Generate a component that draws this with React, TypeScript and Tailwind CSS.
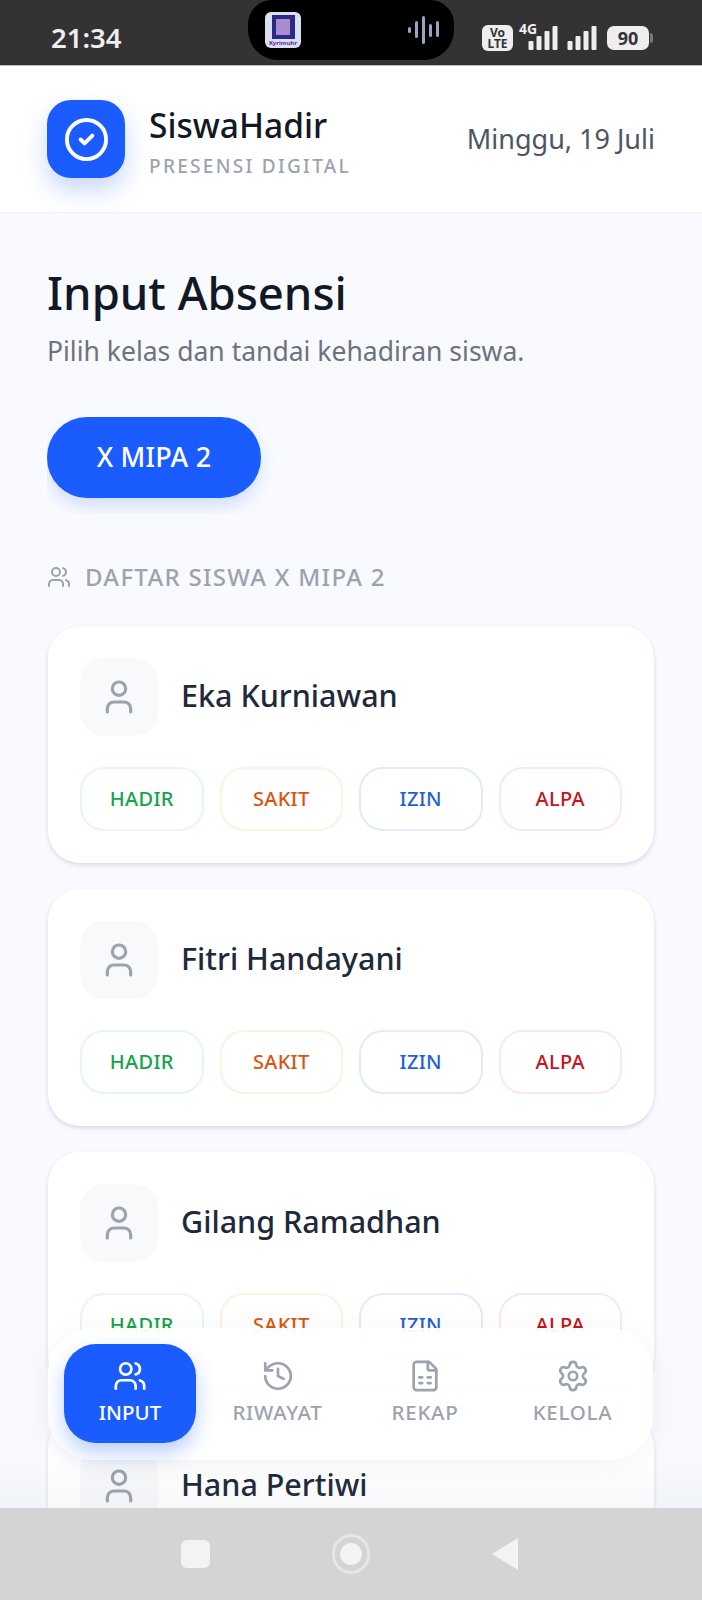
import { CircleCheck, FileSpreadsheet, History, Settings, User, Users } from "lucide-react";

const students = ["Eka Kurniawan", "Fitri Handayani", "Gilang Ramadhan", "Hana Pertiwi"];

const statuses = [
  { label: "HADIR", className: "border-[#e6f8ed] text-[#16a34a]" },
  { label: "SAKIT", className: "border-[#fdf1df] text-[#d9560f]" },
  { label: "IZIN", className: "border-[#e0ebfb] text-[#1f5fd8]" },
  { label: "ALPA", className: "border-[#fbe8e8] text-[#c8141e]" },
];

const tabs = [
  { label: "RIWAYAT", icon: History },
  { label: "REKAP", icon: FileSpreadsheet },
  { label: "KELOLA", icon: Settings },
];

const Signal = ({ className }: { className?: string }) => (
  <svg viewBox="0 0 30 24" className={className} fill="#eeeeee">
    <rect x="0" y="15" width="5" height="9" rx="1" />
    <rect x="8" y="10" width="5" height="14" rx="1" />
    <rect x="16" y="5" width="5" height="19" rx="1" />
    <rect x="24" y="0" width="5" height="24" rx="1" />
  </svg>
);

const StatusBar = () => (
  <div className="relative h-[66px] shrink-0 bg-[#333333] border-b border-[#bdbdbd]">
    <span className="absolute left-[51px] top-[21px] text-[27.5px] leading-[34px] font-semibold text-[#eeeeee]">21:34</span>
    <div className="absolute left-[248px] top-0 h-[60px] w-[206px] rounded-b-[30px] rounded-t-[24px] bg-black">
      <div className="absolute left-[17px] top-[12px] flex h-[36px] w-[36px] flex-col items-center overflow-hidden rounded-[6px] bg-[#d9e0f2] pt-[3px]">
        <div className="flex h-[24px] w-[23px] shrink-0 items-center justify-center bg-[#2c2a86]">
          <div className="h-[16px] w-[14px] bg-[#a98bd0]" />
        </div>
        <span className="text-[6px] leading-[8px] font-bold text-[#6b21a8]">Kyrimuhr</span>
      </div>
      <svg viewBox="0 0 34 28" className="absolute left-[158px] top-[16px] h-[28px] w-[34px]" fill="#9aa2c8">
        <rect x="2" y="11" width="3" height="6" rx="1.5" />
        <rect x="9" y="5" width="3" height="17" rx="1.5" />
        <rect x="16" y="0" width="3" height="28" rx="1.5" />
        <rect x="23" y="8" width="3" height="13" rx="1.5" />
        <rect x="30" y="5" width="3" height="16" rx="1.5" />
      </svg>
    </div>
    <div className="absolute left-[482px] top-[25px] flex h-[26px] w-[31px] flex-col items-center justify-center rounded-[6px] bg-[#eeeeee] text-[12px] leading-[11px] font-bold text-[#333333]">
      <span>Vo</span>
      <span>LTE</span>
    </div>
    <span className="absolute left-[519px] top-[22px] text-[14px] leading-[14px] font-bold text-[#eeeeee]">4G</span>
    <Signal className="absolute left-[528px] top-[26px] h-[24px] w-[31px]" />
    <Signal className="absolute left-[567px] top-[26px] h-[24px] w-[31px]" />
    <div className="absolute left-[607px] top-[26px] flex h-[24px] w-[42px] items-center justify-center rounded-[7px] bg-[#eeeeee] text-[18px] font-bold text-[#333333]">90</div>
    <div className="absolute left-[650px] top-[33px] h-[10px] w-[3px] rounded-r-sm bg-[#777777]" />
  </div>
);

const StudentCard = ({ name }: { name: string }) => (
  <div className="mx-px h-[237px] shrink-0 rounded-[32px] bg-white px-[32px] pt-[32px] shadow-[0_2px_4px_rgba(15,23,42,0.14)]">
    <div className="flex items-center gap-[23px]">
      <div className="flex h-[78px] w-[78px] items-center justify-center rounded-[24px] bg-[#f8f9fb]">
        <User className="h-[40px] w-[40px] text-[#9ca3af]" strokeWidth={1.9} />
      </div>
      <span className="pb-[2px] text-[30.5px] font-medium text-[#1e293b]">{name}</span>
    </div>
    <div className="mt-[31px] grid grid-cols-4 gap-[16px]">
      {statuses.map((status) => (
        <div
          key={status.label}
          className={`flex h-[64px] items-center justify-center rounded-[24px] border-2 bg-white text-[20px] font-medium tracking-[0.3px] ${status.className}`}
        >
          {status.label}
        </div>
      ))}
    </div>
  </div>
);

const BottomNav = () => (
  <div className="absolute left-[48px] top-[1262px] grid h-[132px] w-[605px] grid-cols-[repeat(4,132px)] gap-[15.5px] rounded-[44px] bg-white/95 pl-[16px] py-[16px] shadow-[0_4px_30px_rgba(15,23,42,0.05)]">
    <div className="flex h-[99px] flex-col items-center justify-center gap-[6px] rounded-[32px] bg-[#1a5cff] pb-[3px] text-white shadow-[0_10px_20px_rgba(37,99,235,0.3)]">
      <Users className="h-[34px] w-[34px]" strokeWidth={1.9} />
      <span className="text-[20.5px] leading-[26px] font-medium">INPUT</span>
    </div>
    {tabs.map((tab) => (
      <div key={tab.label} className="flex h-[99px] flex-col items-center justify-center gap-[6px] pb-[3px] text-[#9ca3af]">
        <tab.icon className="h-[34px] w-[34px]" strokeWidth={1.9} />
        <span className="text-[20.5px] leading-[26px] font-medium tracking-[0.7px]">{tab.label}</span>
      </div>
    ))}
  </div>
);

const SystemNav = () => (
  <div className="relative flex h-[92px] shrink-0 items-center bg-[#d4d4d4]">
    <div className="absolute left-[181px] top-[32px] h-[28px] w-[29px] rounded-[6px] bg-[#f3f3f3]" />
    <div className="absolute left-[332px] top-[26px] flex h-[40px] w-[38px] items-center justify-center rounded-full border-[3px] border-[#e6e6e6]">
      <div className="h-[22px] w-[22px] rounded-full bg-[#f3f3f3]" />
    </div>
    <svg viewBox="0 0 26 32" className="absolute left-[492px] top-[30px] h-[32px] w-[26px]" fill="#f3f3f3">
      <path d="M26 0 V32 L0 16 Z" />
    </svg>
  </div>
);

export default function App() {
  return (
    <div className="flex h-[1600px] w-[702px] flex-col overflow-hidden bg-[#f8faff] font-['Noto_Sans',sans-serif]">
      <StatusBar />
      <div className="relative flex-1 overflow-hidden">
        <div className="flex h-[147px] items-center justify-between border-b border-[#f1f3f7] bg-white px-[47px]">
          <div className="flex items-center gap-[24px]">
            <div className="flex h-[78px] w-[78px] items-center justify-center rounded-[24px] bg-[#1a5cff] shadow-[0_12px_24px_rgba(37,99,235,0.25)]">
              <CircleCheck className="h-[47px] w-[47px] text-white" strokeWidth={2} />
            </div>
            <div className="flex flex-col pt-[3px]">
              <span className="text-[33.5px] leading-[44px] font-medium text-[#111827]">SiswaHadir</span>
              <span className="mt-[6px] text-[19px] leading-[26px] font-medium tracking-[2.3px] text-[#9ca3af]">PRESENSI DIGITAL</span>
            </div>
          </div>
          <span className="text-[27px] text-[#4b5563]">Minggu, 19 Juli</span>
        </div>
        <div className="px-[47px] pt-[49px]">
          <h1 className="text-[45.5px] leading-[60px] font-medium text-[#111827]">Input Absensi</h1>
          <p className="mt-[11px] text-[26.5px] leading-[36px] text-[#6b7280]">Pilih kelas dan tandai kehadiran siswa.</p>
          <div className="mt-[48px] overflow-hidden pb-[16px] pr-[16px]">
            <div className="flex h-[81px] w-[214px] items-center justify-center rounded-[40px] bg-[#1a5cff] text-[27px] font-medium tracking-[0.2px] text-white shadow-[0_8px_16px_rgba(37,99,235,0.18)]">
              X MIPA 2
            </div>
          </div>
          <div className="mt-[47px] flex items-center gap-[14px]">
            <Users className="h-[24px] w-[24px] text-[#9ca3af]" strokeWidth={2} />
            <span className="text-[24px] leading-[32px] font-medium tracking-[1.3px] text-[#9ca3af]">DAFTAR SISWA X MIPA 2</span>
          </div>
          <div className="mt-[33px] flex flex-col gap-[26px]">
            {students.map((name) => (
              <StudentCard key={name} name={name} />
            ))}
          </div>
        </div>
        <BottomNav />
        <div className="pointer-events-none absolute inset-x-0 bottom-0 h-[50px] bg-linear-to-b from-transparent to-slate-500/5" />
      </div>
      <SystemNav />
    </div>
  );
}
